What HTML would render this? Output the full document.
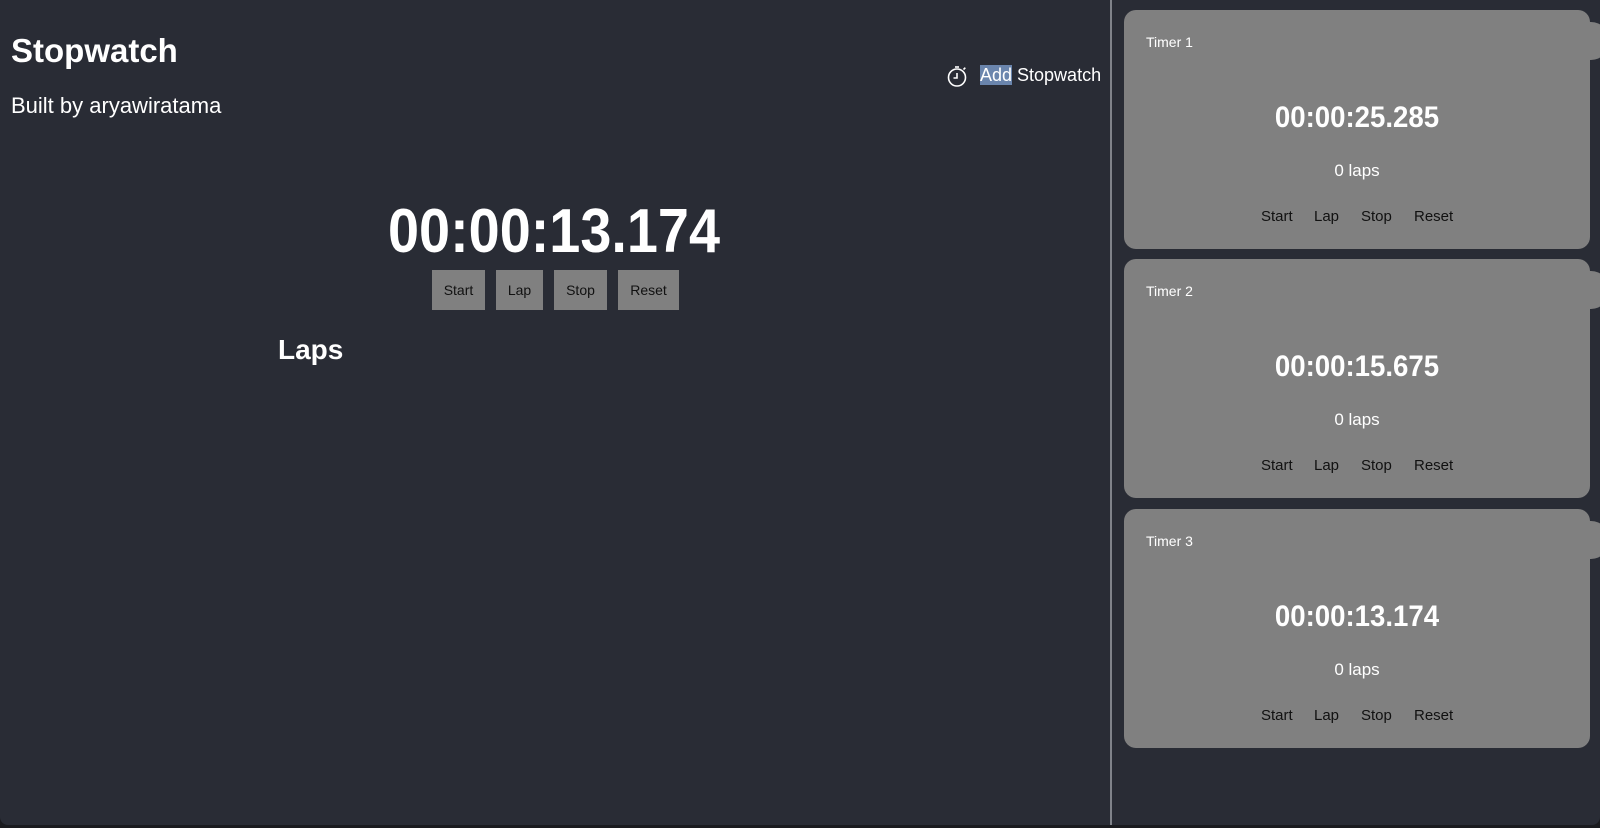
<!DOCTYPE html>
<html><head><meta charset="utf-8"><style>
*{margin:0;padding:0;box-sizing:border-box}
body{width:1600px;height:828px;overflow:hidden;background:#1a1b1f;font-family:"Liberation Sans",Arial,sans-serif;color:#fff;position:relative}
.page{position:absolute;left:0;top:0;width:1600px;height:825px;background:#292c35;border-radius:0 0 8px 8px}
.a{position:absolute;white-space:nowrap;line-height:1}
h1{position:absolute;left:11px;top:34px;font-size:33px;font-weight:bold;line-height:1}
.sub{left:11px;top:95px;font-size:22px}
.big{left:554px;top:201px;font-size:62px;font-weight:bold;transform:translateX(-50%) scaleX(0.9);}
.btn{position:absolute;top:270px;height:40px;background:#808080;color:#111;font-size:14px;display:flex;align-items:center;justify-content:center}
.laps{left:278px;top:336px;font-size:28px;font-weight:bold}
.add{left:980px;top:66px;font-size:18px}
.add span{background:#6a85ad}
.div{position:absolute;left:1110px;top:0;width:2px;height:825px;background:#80838a}
.card{position:absolute;left:1124px;width:466px;height:239px;background:#808080;border-radius:12px}
.bump{position:absolute;left:1570px;width:40px;height:38px;border-radius:19px;background:#808080}
.card .lab{position:absolute;left:22px;top:24px;font-size:14px}
.card .t{position:absolute;left:233px;top:91px;font-size:30px;font-weight:bold;transform:translateX(-50%) scaleX(0.92);white-space:nowrap}
.card .l{position:absolute;left:0;width:466px;text-align:center;top:151px;font-size:17px}
.card .b{position:absolute;top:198px;font-size:15px;color:#111}
</style></head><body>
<div class="page"></div>
<h1>Stopwatch</h1>
<div class="a sub">Built by aryawiratama</div>
<div class="a big">00:00:13.174</div>
<div class="btn" style="left:432px;width:53px">Start</div>
<div class="btn" style="left:496px;width:47px">Lap</div>
<div class="btn" style="left:554px;width:53px">Stop</div>
<div class="btn" style="left:618px;width:61px">Reset</div>
<div class="a laps">Laps</div>
<svg style="position:absolute;left:946px;top:64px" width="22" height="24" viewBox="0 0 22 24" fill="none" stroke="#fff" stroke-width="1.6">
<circle cx="11" cy="13.5" r="8.5"/><path d="M11 9v5H7.5"/><path d="M9 3h4"/><path d="M17.5 5.5l1.8-1.8"/>
</svg>
<div class="a add"><span>Add</span> Stopwatch</div>
<div class="div"></div>

<div class="bump" style="top:22px"></div>
<div class="card" style="top:10px"><div class="lab">Timer 1</div><div class="t">00:00:25.285</div><div class="l">0 laps</div>
<div class="b" style="left:137px">Start</div><div class="b" style="left:190px">Lap</div><div class="b" style="left:237px">Stop</div><div class="b" style="left:290px">Reset</div></div>

<div class="bump" style="top:271px"></div>
<div class="card" style="top:259px"><div class="lab">Timer 2</div><div class="t">00:00:15.675</div><div class="l">0 laps</div>
<div class="b" style="left:137px">Start</div><div class="b" style="left:190px">Lap</div><div class="b" style="left:237px">Stop</div><div class="b" style="left:290px">Reset</div></div>

<div class="bump" style="top:521px"></div>
<div class="card" style="top:509px"><div class="lab">Timer 3</div><div class="t">00:00:13.174</div><div class="l">0 laps</div>
<div class="b" style="left:137px">Start</div><div class="b" style="left:190px">Lap</div><div class="b" style="left:237px">Stop</div><div class="b" style="left:290px">Reset</div></div>
</body></html>
